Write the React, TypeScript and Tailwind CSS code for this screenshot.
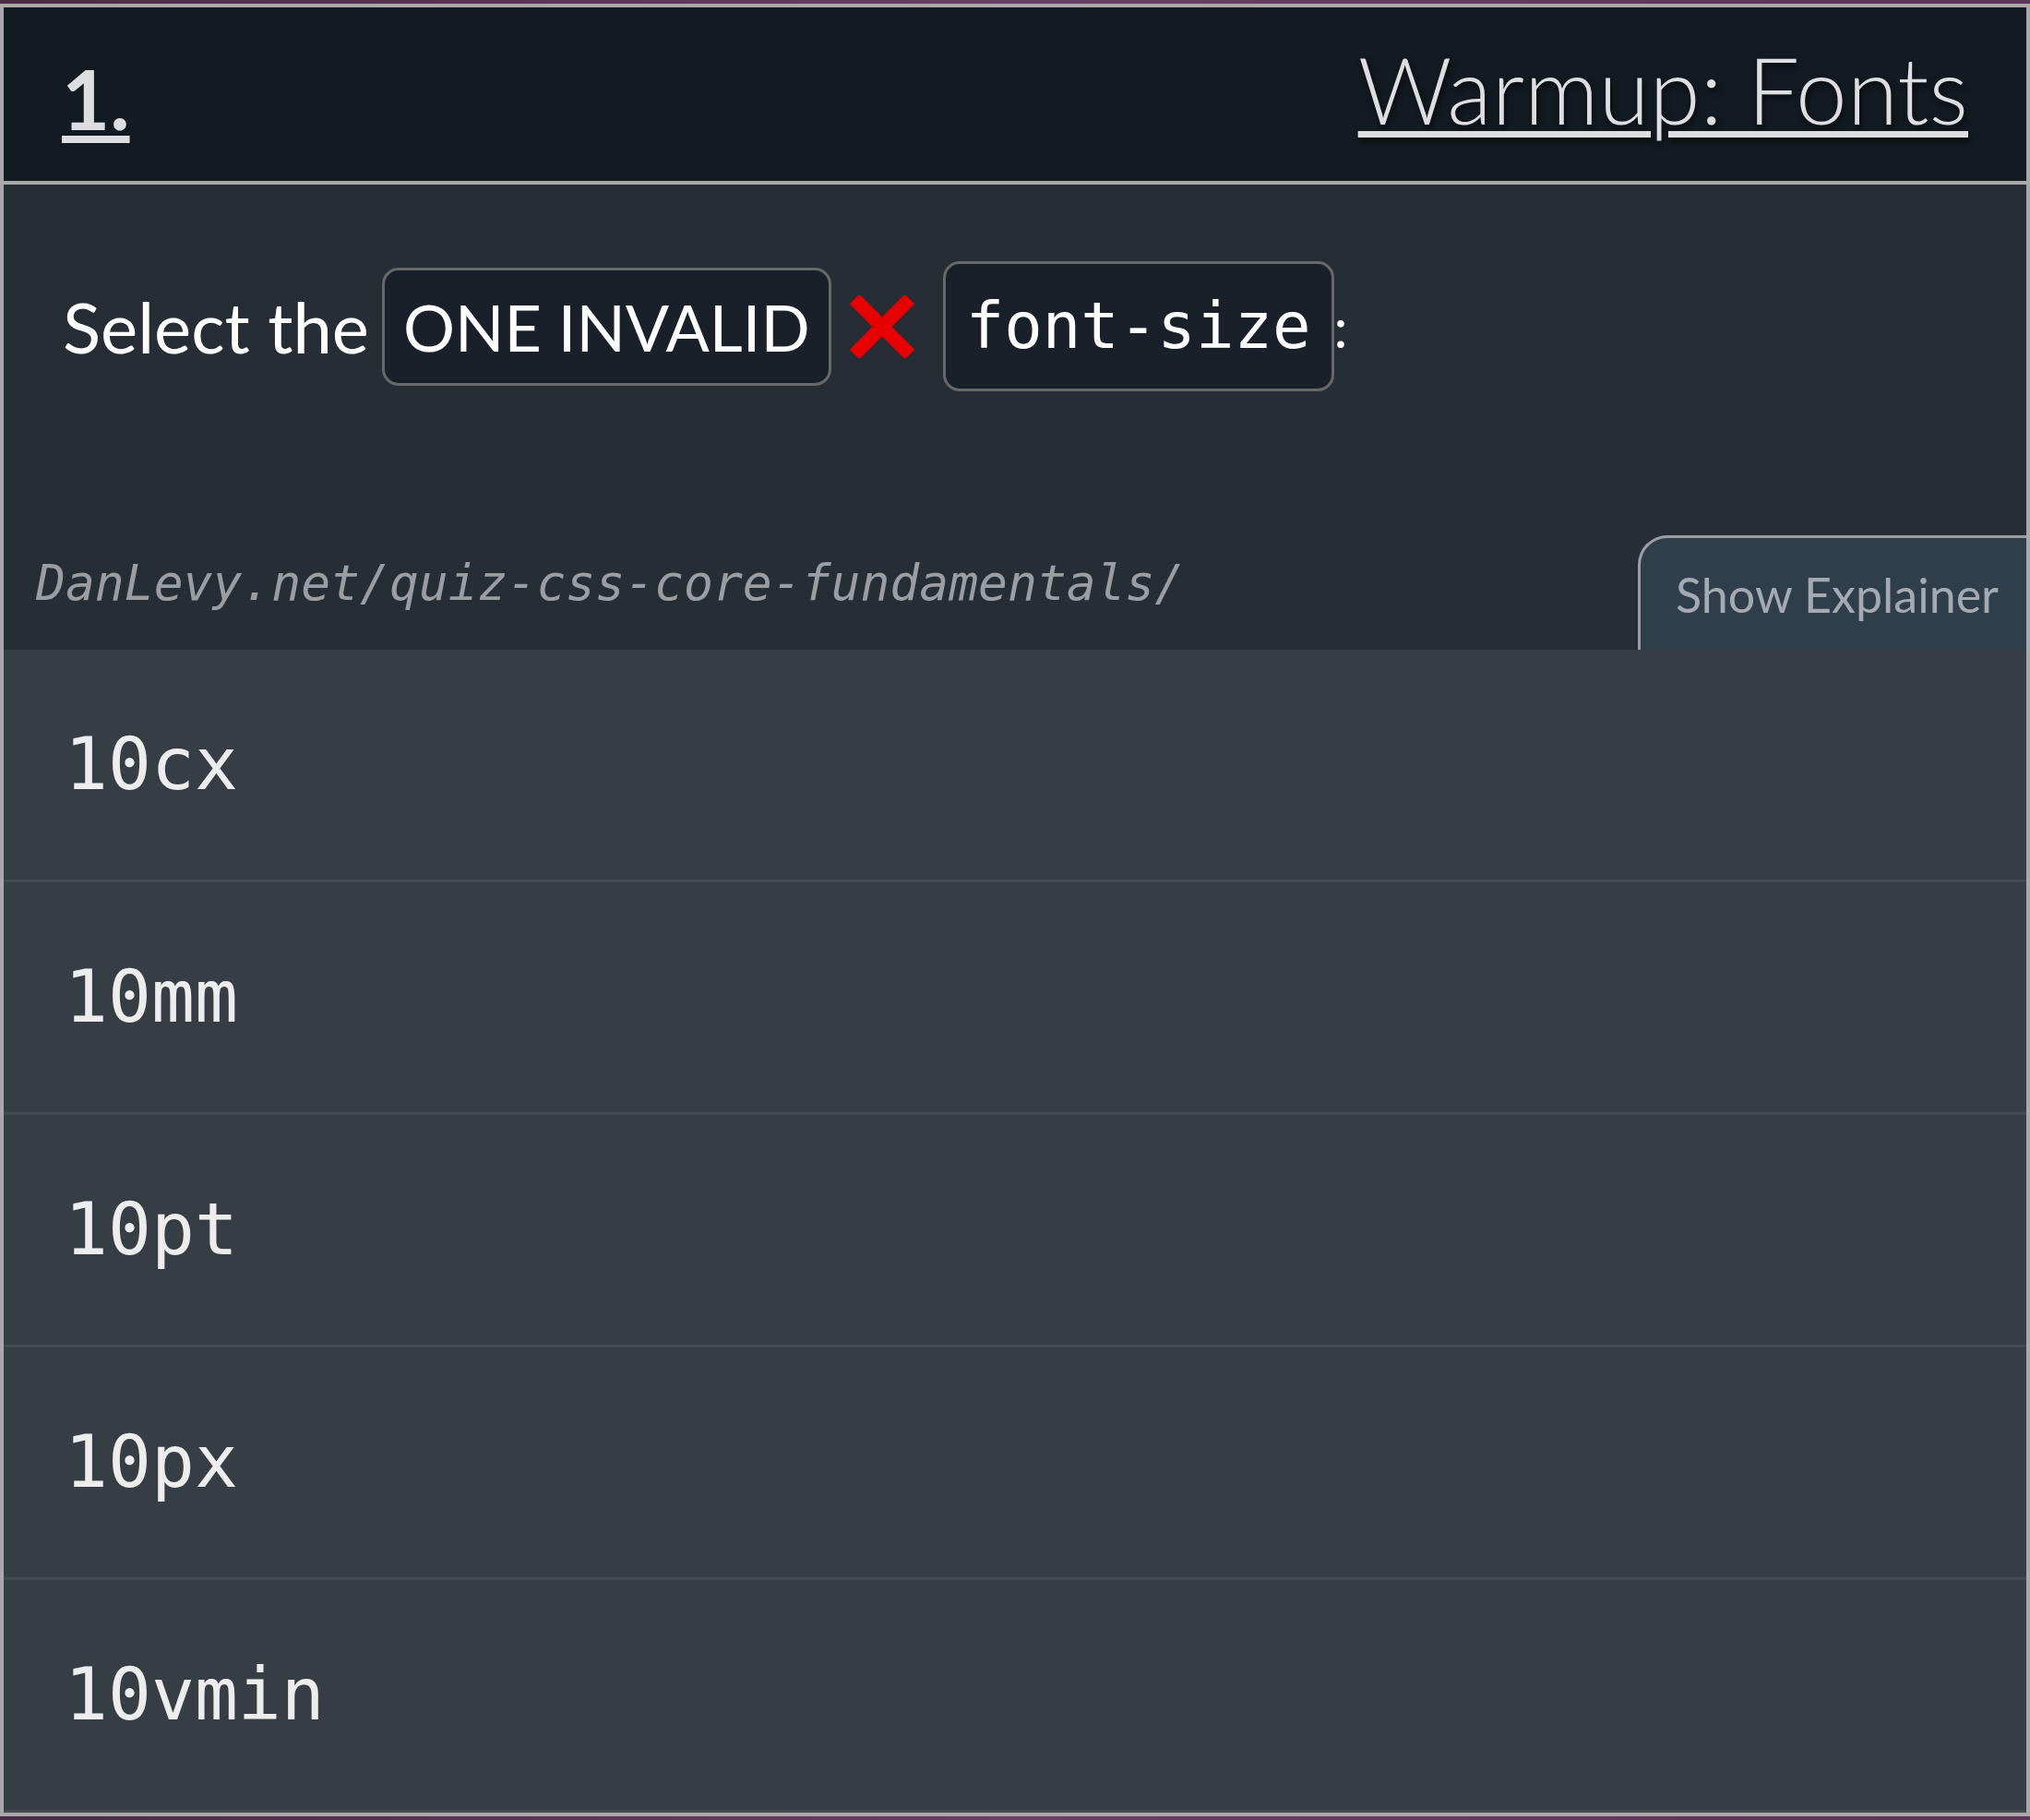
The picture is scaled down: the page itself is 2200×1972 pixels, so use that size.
import { FC } from 'react';

const options = ['10cx', '10mm', '10pt', '10px', '10vmin'];

const CrossMark: FC = () => (
	<svg width="70" height="68" viewBox="0 0 70 68" className="ml-[20px] mr-[31px] shrink-0">
		<path d="M5 4 L65 64 M65 4 L5 64" stroke="#e80000" strokeWidth="15" strokeLinecap="butt" />
	</svg>
);

export default function App() {
	return (
		<div className="w-[2200px] min-h-[1972px] bg-gradient-to-r from-[#4a2a48] via-[#6e3c68] to-[#5e3259] py-[4px]">
			<div className="border-4 border-[#a9a9a9] bg-[#272d34]">
				{/* header */}
				<div className="h-[188px] bg-[#131a21] px-[63px] flex items-center justify-between border-b-4 border-[#a9a9a9] box-content">
					<span
						className="mt-[8px] text-[90px] leading-none font-bold text-[#dcdee2] underline decoration-[8px] underline-offset-[6px]"
						style={{ fontFamily: 'Lato, sans-serif' }}
					>
						1.
					</span>
					<span
						className="mb-[12px] text-[100px] leading-none font-light text-[#dcdee2] underline decoration-[7px] underline-offset-[7px] [text-shadow:2px_4px_6px_rgba(0,0,0,0.6)]"
						style={{ fontFamily: 'Lato, sans-serif' }}
					>
						Warmup: Fonts
					</span>
				</div>

				{/* question */}
				<div className="h-[504px] flex flex-col">
					<div className="pt-[83px] pl-[64px] flex items-center text-white" style={{ fontFamily: 'Lato, sans-serif' }}>
						<span className="text-[76px] leading-none mr-[14px]">Select the</span>
						<span className="h-[128px] flex items-center px-[20px] border-[3px] border-[#67686a] rounded-[18px] bg-[#19202a] text-[70px] leading-none">
							ONE INVALID
						</span>
						<CrossMark />
						<span
							className="h-[141px] flex items-center px-[22px] border-[3px] border-[#67686a] rounded-[18px] bg-[#19202a] text-[69px] leading-none"
							style={{ fontFamily: '"DejaVu Sans Mono", monospace' }}
						>
							font-size
						</span>
						<span className="text-[60px] leading-none">:</span>
					</div>

					<div className="mt-auto flex items-end justify-between">
						<span
							className="pl-[35px] pb-[46px] text-[53px] leading-none italic text-[#9a9da1]"
							style={{ fontFamily: '"DejaVu Sans Mono", monospace' }}
						>
							DanLevy.net/quiz-css-core-fundamentals/
						</span>
						<div
							className="w-[421px] h-[124px] rounded-tl-[32px] border-t-[3px] border-l-[3px] border-[#9a9ea3] bg-[#2f3e4b] flex items-center pl-[38px] text-[52px] text-[#a3aab2] whitespace-nowrap overflow-hidden"
							style={{ fontFamily: 'Lato, sans-serif' }}
						>
							Show Explainer
						</div>
					</div>
				</div>

				{/* options */}
				<div className="flex flex-col">
					{options.map((o) => (
						<div
							key={o}
							className="h-[252px] bg-[#363d45] border-b-[3px] border-[#424a52] flex items-center pl-[66px] text-[78px] text-[#ededed]"
							style={{ fontFamily: '"DejaVu Sans Mono", monospace' }}
						>
							{o}
						</div>
					))}
				</div>
			</div>
		</div>
	);
}
